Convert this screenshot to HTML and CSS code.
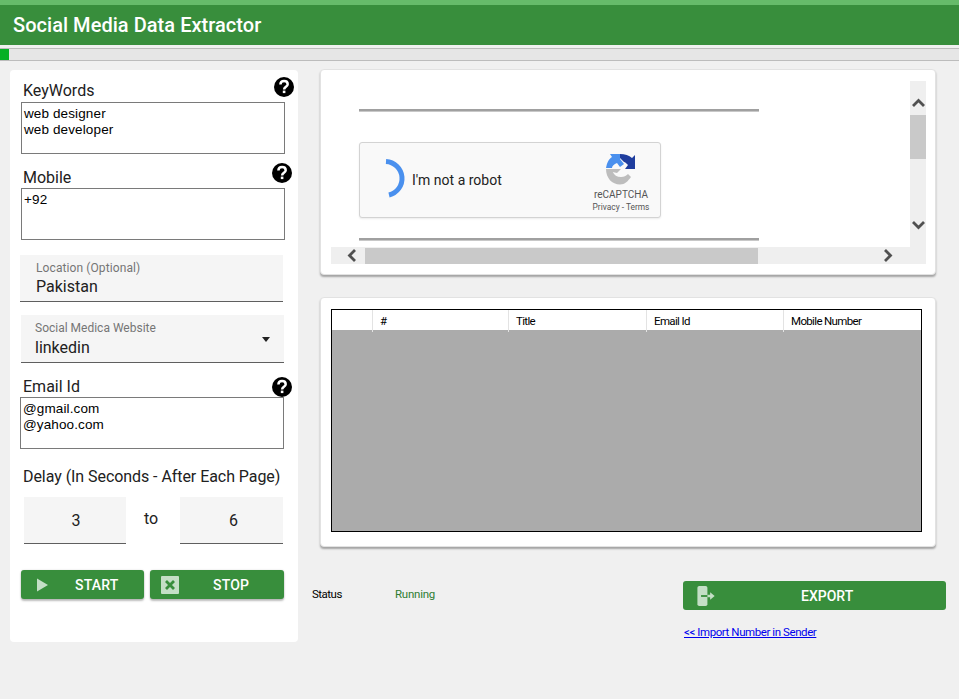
FILE: index.html
```html
<!DOCTYPE html>
<html lang="en">
<head>
<meta charset="utf-8">
<title>Social Media Data Extractor</title>
<link rel="stylesheet" href="styles.css">
</head>
<body>
<svg class="defs" width="0" height="0">
  <symbol id="help" viewBox="0 0 20 20">
    <circle cx="10" cy="10" r="10" fill="#000"/>
    <path d="M6.400 7.600c0-2.300 1.700-3.500 3.700-3.500s3.600 1.200 3.600 3.100c0 2.500-3.600 2.600-3.600 5.200" fill="none" stroke="#fff" stroke-width="2.500"/>
    <rect x="8.800" y="13.600" width="2.600" height="2.500" fill="#fff"/>
  </symbol>
</svg>
<header class="appbar"><h1 class="appbar-title">Social Media Data Extractor</h1></header>
<div class="progress"><div class="progress-fill"></div></div>
<main class="layout">
  <aside class="form-card">
    <div class="label-row">
      <span class="label label-kw">KeyWords</span>
      <svg class="help help-kw"><use href="#help"/></svg>
    </div>
    <div class="textbox">web designer<br>web developer</div>
    <div class="label-row mob-row">
      <span class="label">Mobile</span>
      <svg class="help help-mob"><use href="#help"/></svg>
    </div>
    <div class="textbox">+92</div>
    <div class="filled loc">
      <span class="filled-cap">Location (Optional)</span>
      <span class="filled-val">Pakistan</span>
    </div>
    <div class="filled site">
      <span class="filled-cap">Social Medica Website</span>
      <span class="filled-val">linkedin</span>
      <span class="caret"></span>
    </div>
    <div class="label-row mail-row">
      <span class="label">Email Id</span>
      <svg class="help help-mail"><use href="#help"/></svg>
    </div>
    <div class="textbox box-mail">@gmail.com<br>@yahoo.com</div>
    <div class="delay-label">Delay (In Seconds - After Each Page)</div>
    <div class="delay-row">
      <div class="delay-box">3</div>
      <span class="delay-to">to</span>
      <div class="delay-box delay-box-b">6</div>
    </div>
    <div class="actions">
      <button class="btn btn-start">
        <svg class="btn-icon-play" viewBox="0 0 12 14"><path d="M0 0l12 7-12 7z" fill="#c4dfc6"/></svg>
        <span>START</span>
      </button>
      <button class="btn btn-stop">
        <svg class="btn-icon-stop" viewBox="0 0 18 18"><rect width="18" height="18" rx="1" fill="#c4dfc6"/><path d="M5 5l8 8M13 5l-8 8" stroke="#388e3c" stroke-width="2.800"/></svg>
        <span>STOP</span>
      </button>
    </div>
  </aside>
  <section class="right">
    <div class="card browser-card">
      <div class="browser">
        <div class="view">
          <div class="rule"></div>
          <div class="captcha">
            <svg class="spinner" viewBox="0 0 24 40"><path d="M3 2.500A17 17 0 0 1 6 36" fill="none" stroke="#4a90ee" stroke-width="5"/></svg>
            <span class="captcha-text">I'm not a robot</span>
            <div class="captcha-brand">
              <svg class="rc-logo" viewBox="0 0 32 31">
                <path d="M1 14C2 8 4 5 7 3L5 0H15V5L19 10 15 13 12 9C9 10 7 12 7 14z" fill="#4a90ee"/>
                <path d="M15 0C20 0 24 1.500 27 4L30 1V15H20L23 11C21 9 20 8 19 8L15 4z" fill="#1f3d9e"/>
                <path d="M1 15H16L12 19 7.800 18C9 21 12 23 16 23 19 23 21 22 23 20L26 23C23 27 20 30.500 15 30.500 7 30.500 1 24 1 15z" fill="#bdbdbd"/>
              </svg>
              <span class="rc-name">reCAPTCHA</span>
              <span class="rc-links">Privacy - Terms</span>
            </div>
          </div>
          <div class="rule"></div>
        </div>
        <div class="vbar">
          <svg class="arrow" viewBox="0 0 13 9"><path d="M1 8l5.500-5.500L12 8" fill="none" stroke="#505050" stroke-width="2.800"/></svg>
          <div class="vthumb"></div>
          <svg class="arrow arrow-down" viewBox="0 0 13 9"><path d="M1 1l5.500 5.500L12 1" fill="none" stroke="#505050" stroke-width="2.800"/></svg>
        </div>
        <div class="hbar">
          <svg class="harrow" viewBox="0 0 9 13"><path d="M8 1L2.500 6.500 8 12" fill="none" stroke="#505050" stroke-width="2.800"/></svg>
          <div class="hthumb"></div>
          <svg class="harrow harrow-r" viewBox="0 0 9 13"><path d="M1 1l5.500 5.500L1 12" fill="none" stroke="#505050" stroke-width="2.800"/></svg>
        </div>
      </div>
    </div>
    <div class="card table-card">
      <div class="grid">
        <div class="grid-head">
          <div class="th"></div>
          <div class="th">#</div>
          <div class="th">Title</div>
          <div class="th">Email Id</div>
          <div class="th">Mobile Number</div>
        </div>
        <div class="grid-body"></div>
      </div>
    </div>
    <div class="footer">
      <div class="status">
        <span class="status-key">Status</span>
        <span class="status-val">Running</span>
      </div>
      <div class="export-col">
        <button class="btn-export">
          <svg class="export-icon" viewBox="0 0 20 22"><path d="M2 0h7a2 2 0 0 1 2 2v18a2 2 0 0 1-2 2H2a2 2 0 0 1-2-2V2a2 2 0 0 1 2-2z" fill="#c4dfc6"/><path d="M4 11h10" stroke="#388e3c" stroke-width="2"/><path d="M11 9.500h3V7l5 4-5 4v-2.500h-3z" fill="#c4dfc6"/></svg>
          <span>EXPORT</span>
        </button>
        <a class="import-link" href="#">&lt;&lt; Import Number in Sender</a>
      </div>
    </div>
  </section>
</main>
</body>
</html>
```

FILE: styles.css
```css
* { box-sizing: border-box; }
html, body { margin: 0; height: 699px; overflow: hidden; }
body { background: #f0f0f0; font-family: Roboto, sans-serif; color: #212121; }
.defs { position: absolute; }

.appbar { height: 45px; background: #388e3c; border-top: 5px solid #66bb6a; display: flex; align-items: center; padding-left: 13px; }
.appbar-title { margin: 0; font-size: 20px; font-weight: 500; letter-spacing: .04px; color: #fff; }

.progress { margin-top: 3px; height: 13px; background: #e6e6e6; border-top: 1px solid #bcbcbc; border-bottom: 1px solid #bcbcbc; }
.progress-fill { width: 9px; height: 100%; background: #06b025; }

.layout { display: flex; align-items: flex-start; padding: 9px 0 0 10px; }

.form-card { width: 288px; height: 572px; background: #fff; border-radius: 4px; padding-top: 10px; display: flex; flex-direction: column; }
.label-row { display: flex; justify-content: space-between; align-items: flex-end; height: 22px; padding-left: 13px; }
.label { font-size: 16px; line-height: 20px; color: #212121; }
.label-kw { margin-bottom: 1px; }
.help { width: 20px; height: 20px; flex: none; }
.help-kw { margin: 0 4px 5px 0; }
.help-mob { margin: 0 6px 5px 0; }
.help-mail { margin: 0 6px 0 0; }

.textbox { margin-left: 11px; width: 264px; height: 52px; flex: none; border: 1px solid #7a7a7a; padding: 3px 2px; font-family: "Liberation Sans", Arial, sans-serif; font-size: 13.500px; letter-spacing: .12px; line-height: 16px; color: #000; }
.mob-row { margin-top: 12px; }

.filled { position: relative; background: #f5f5f5; border-bottom: 1px solid #5f5f5f; display: flex; flex-direction: column; flex: none; }
.filled-cap { font-size: 12px; line-height: 14px; color: #757575; }
.filled-val { font-size: 16px; line-height: 19px; color: #212121; }
.loc { margin: 15px 0 0 10px; width: 263px; height: 47px; padding: 6px 0 0 16px; }
.loc .filled-cap { letter-spacing: .1px; }
.loc .filled-val { margin-top: 2px; }
.site { margin: 13px 0 0 11px; width: 263px; height: 48px; padding: 6px 0 0 14px; }
.site .filled-val { margin-top: 3px; }
.caret { position: absolute; right: 14px; top: 22px; border-left: 4px solid transparent; border-right: 4px solid transparent; border-top: 5px solid #212121; }

.mail-row { margin-top: 12px; }
.box-mail { margin-left: 10px; }

.delay-label { margin: 18px 0 0 13px; font-size: 16px; line-height: 20px; letter-spacing: -.06px; }
.delay-row { display: flex; margin: 10px 0 0 14px; align-items: center; }
.delay-box { width: 102px; height: 47px; background: #f5f5f5; border-bottom: 1px solid #5f5f5f; text-align: center; font-size: 16px; line-height: 47px; color: #212121; padding-left: 2px; }
.delay-box-b { width: 103px; padding-left: 4px; }
.delay-to { width: 54px; padding-right: 4px; text-align: center; font-size: 16px; margin-top: -4px; }

.actions { display: flex; margin: 26px 0 0 11px; gap: 6px; }
.btn { position: relative; width: 123px; height: 29px; border: 0; border-radius: 3px; background: #388e3c; color: #fff; font: 500 14px Roboto, sans-serif; letter-spacing: .2px; box-shadow: 0 2px 2px rgba(0,0,0,.25), 0 0 2px rgba(0,0,0,.15); display: flex; align-items: center; padding: 0; }
.btn-start span { margin-left: 27px; }
.btn-stop span { margin-left: 34px; }
.btn-icon-play { width: 11px; height: 14px; margin-left: 16px; flex: none; }
.btn-icon-stop { width: 18px; height: 18px; margin-left: 11px; flex: none; }
.btn-stop { width: 134px; }

.right { margin: -1px 0 0 22px; width: 616px; }
.card { background: #fff; border-radius: 4px; border: 1px solid #e2e2e2; box-shadow: 0 2px 2px rgba(0,0,0,.32); }
.browser-card { height: 206px; padding: 11px 10px 10px; }
.browser { display: grid; grid-template-columns: 579px 16px; grid-template-rows: 166px 17px; }
.view { padding: 28px 0 0 28px; }
.rule { width: 400px; height: 3px; background: #a0a0a0; border-bottom: 1px solid #c8c8c8; }
.captcha { width: 302px; height: 76px; margin: 30px 0 20px; background: #f9f9f9; border: 1px solid #d3d3d3; border-radius: 3px; box-shadow: 0 1px 2px rgba(0,0,0,.08); display: flex; align-items: center; position: relative; }
.spinner { width: 24px; height: 40px; margin: -2px 0 0 23px; flex: none; }
.captcha-text { margin: 0 0 0 5px; font-size: 14px; color: #222; }
.captcha-brand { position: absolute; right: 10px; top: 11px; display: flex; flex-direction: column; align-items: center; width: 58px; }
.rc-logo { width: 32px; height: 31px; }
.rc-name { font: 10px/12px Roboto, sans-serif; color: #555; margin-top: 4px; }
.rc-links { font: 8.400px/10px Roboto, sans-serif; color: #555; margin-top: 1px; white-space: nowrap; }

.vbar { grid-column: 2; grid-row: 1 / 3; background: #efefef; display: flex; flex-direction: column; align-items: center; padding-top: 17px; }
.arrow { width: 13px; height: 9px; flex: none; }
.arrow-down { margin-top: 62px; }
.vthumb { width: 16px; height: 44px; margin-top: 8px; background: #c9c9c9; }
.hbar { grid-column: 1; grid-row: 2; background: #efefef; display: flex; align-items: center; padding-left: 16px; }
.harrow { width: 9px; height: 13px; flex: none; }
.hthumb { width: 393px; height: 16px; margin-left: 9px; background: #c9c9c9; }
.harrow-r { margin-left: 126px; }

.table-card { height: 250px; margin-top: 22px; padding: 11px 10px; }
.grid { width: 591px; height: 223px; border: 1px solid #000; display: flex; flex-direction: column; background: #ababab; }
.grid-head { display: grid; grid-template-columns: 41px 136px 138px 137px 137px; height: 20px; background: #fff; flex: none; }
.th { border-right: 1px solid #e3e3e3; padding-left: 7px; font-size: 11.500px; line-height: 22px; letter-spacing: -.65px; color: #000; }
.th:last-child { border-right: 0; }
.grid-body { flex: 1; }

.footer { display: flex; justify-content: space-between; margin: 34px 0 0 -8px; width: 634px; align-items: flex-start; }
.status { display: flex; font-size: 11.500px; line-height: 14px; letter-spacing: -.5px; padding-top: 6px; color: #000; }
.status-key { width: 83px; }
.status-val { color: #2e7d32; letter-spacing: -.25px; }
.export-col { width: 263px; display: flex; flex-direction: column; align-items: flex-start; }
.btn-export { width: 263px; height: 29px; border: 0; border-radius: 3px; background: #388e3c; color: #fff; font: 500 14px Roboto, sans-serif; display: flex; align-items: center; padding: 0; }
.export-icon { width: 19px; height: 20px; margin-left: 14px; flex: none; }
.btn-export span { margin-left: 85px; }
.import-link { margin-top: 15px; margin-left: 1px; font-size: 11.500px; line-height: 14px; letter-spacing: -.42px; color: #0000ee; }
```
